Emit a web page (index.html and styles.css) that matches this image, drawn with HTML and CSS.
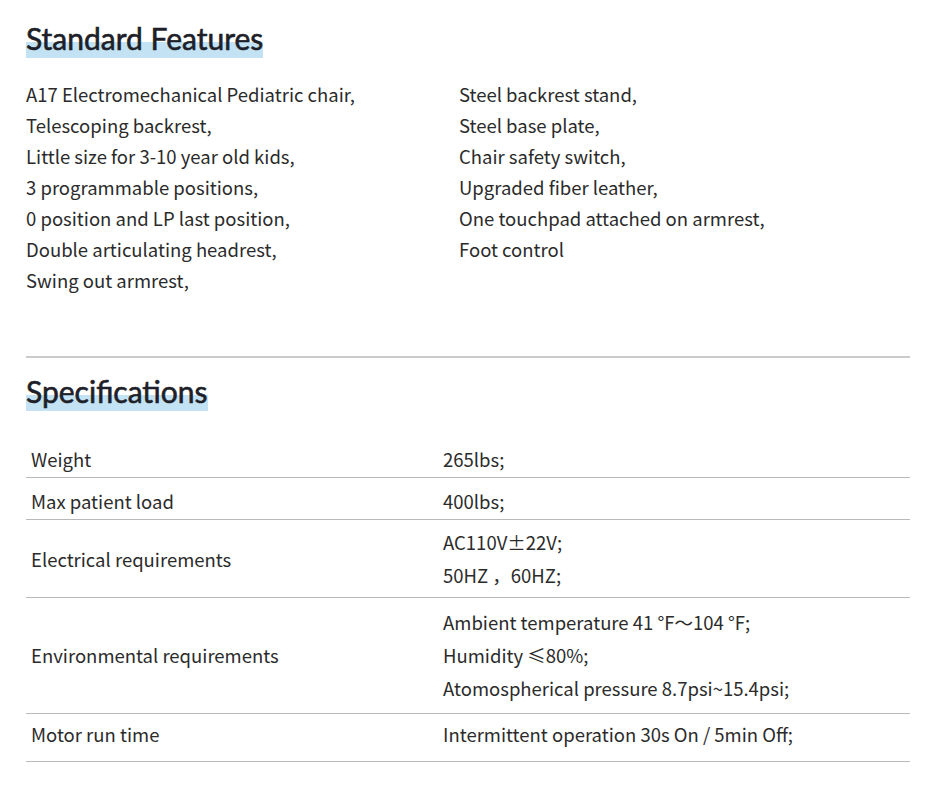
FILE: index.html
```html
<!DOCTYPE html>
<html lang="zh-CN">
<head>
<meta charset="utf-8">
<title>A17 Features</title>
<link rel="stylesheet" href="styles.css">
</head>
<body>
<div class="page">
  <h2 class="title"><span>Standard Features</span></h2>
  <div class="features">
    <ul class="list">
      <li>A17 Electromechanical Pediatric chair,</li>
      <li>Telescoping backrest,</li>
      <li>Little size for 3-10 year old kids,</li>
      <li>3 programmable positions,</li>
      <li>0 position and LP last position,</li>
      <li>Double articulating headrest,</li>
      <li>Swing out armrest,</li>
    </ul>
    <ul class="list">
      <li>Steel backrest stand,</li>
      <li>Steel base plate,</li>
      <li>Chair safety switch,</li>
      <li>Upgraded fiber leather,</li>
      <li>One touchpad attached on armrest,</li>
      <li>Foot control</li>
    </ul>
  </div>
  <hr class="divider">
  <h2 class="title title-spec"><span>Specifications</span></h2>
  <table class="specs">
    <tbody>
      <tr class="row-1">
        <td class="label">Weight</td>
        <td class="value"><div>265lbs;</div></td>
      </tr>
      <tr class="row-1">
        <td class="label">Max patient load</td>
        <td class="value"><div>400lbs;</div></td>
      </tr>
      <tr class="row-2">
        <td class="label">Electrical requirements</td>
        <td class="value"><div>AC110V±22V;</div><div>50HZ ，60HZ;</div></td>
      </tr>
      <tr class="row-3">
        <td class="label">Environmental requirements</td>
        <td class="value"><div>Ambient temperature 41 °F～104 °F;</div><div>Humidity ≤80%;</div><div>Atomospherical pressure 8.7psi~15.4psi;</div></td>
      </tr>
      <tr class="row-last">
        <td class="label">Motor run time</td>
        <td class="value"><div>Intermittent operation 30s On / 5min Off;</div></td>
      </tr>
    </tbody>
  </table>
</div>
</body>
</html>
```
FILE: styles.css
```css
html, body {
  margin: 0;
  padding: 0;
  background: #ffffff;
}

body {
  font-family: "Noto Sans CJK SC", "Noto Sans", sans-serif;
  font-size: 18.5px;
  color: #2b2b2b;
}

.page {
  padding: 18px 34px 0 26px;
}

.title {
  margin: 0;
  font-family: Lato, "Noto Sans", sans-serif;
  font-weight: 400;
  font-size: 30px;
  line-height: 40px;
  color: #1e1f29;
  -webkit-text-stroke: 0.6px #1e1f29;
}

.title span {
  display: inline-block;
  background: linear-gradient(to bottom, transparent 59%, #c3e3f4 59%);
}

.features {
  display: grid;
  grid-template-columns: 433px 1fr;
  margin-top: 21px;
}

.list {
  list-style: none;
  margin: 0;
  padding: 0;
  line-height: 31px;
}

.divider {
  border: 0;
  height: 2px;
  background: #cbcbcb;
  margin: 60px 0 0 0;
}

.title-spec {
  margin-top: 13px;
}

.specs {
  width: 100%;
  border-collapse: collapse;
  margin-top: 25px;
}

.specs td {
  border-bottom: 1px solid #b9b9b9;
  padding: 7px 5px 1px 5px;
  vertical-align: middle;
  line-height: 33px;
}

.specs .label {
  width: 402px;
}

.row-2 td {
  padding-top: 6px;
  padding-bottom: 5px;
}

.row-3 td {
  padding-top: 8px;
  padding-bottom: 8px;
}

.row-last td {
  padding-top: 4px;
  padding-bottom: 10px;
}
```
